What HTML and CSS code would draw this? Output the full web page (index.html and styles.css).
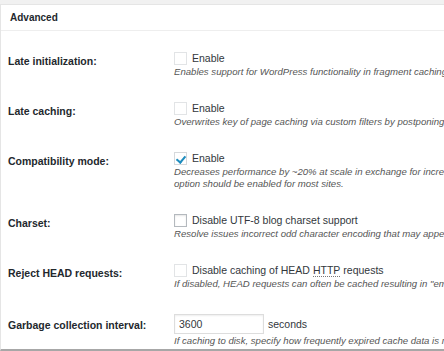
FILE: index.html
```html
<!DOCTYPE html>
<html lang="en">
  <head>
    <meta charset="UTF-8" />
    <meta name="viewport" content="width=device-width, initial-scale=1.0" />
    <title>Advanced settings</title>
    <link rel="stylesheet" href="styles.css">
  </head>
  <body>
    <div class="postbox">
      <h3 class="hndle">Advanced</h3>
      <div class="inside">
        <table class="form-table">
          <tr>
            <th>Late initialization:</th>
            <td>
              <label class="opt"><span class="check faint"></span>Enable</label>
              <p class="description">Enables support for WordPress functionality in fragment caching, e.g. translation support.</p>
            </td>
          </tr>
          <tr>
            <th>Late caching:</th>
            <td>
              <label class="opt"><span class="check faint"></span>Enable</label>
              <p class="description">Overwrites key of page caching via custom filters by postponing entry extraction.</p>
            </td>
          </tr>
          <tr>
            <th>Compatibility mode:</th>
            <td>
              <label class="opt"><span class="check checked"></span>Enable</label>
              <p class="description">Decreases performance by ~20% at scale in exchange for increased interoperability with more hosting environments and WordPress idioms. This<br>option should be enabled for most sites.</p>
            </td>
          </tr>
          <tr>
            <th>Charset:</th>
            <td>
              <label class="opt"><span class="check"></span>Disable UTF-8 blog charset support</label>
              <p class="description">Resolve issues incorrect odd character encoding that may appear in cached pages.</p>
            </td>
          </tr>
          <tr>
            <th>Reject HEAD requests:</th>
            <td>
              <label class="opt"><span class="check faint"></span>Disable caching of HEAD <abbr>HTTP</abbr> requests</label>
              <p class="description">If disabled, HEAD requests can often be cached resulting in "empty pages" being returned for subsequent requests.</p>
            </td>
          </tr>
          <tr class="input-row">
            <th>Garbage collection interval:</th>
            <td>
              <div class="opt"><input class="small-text" type="text" value="3600"> seconds</div>
              <p class="description">If caching to disk, specify how frequently expired cache data is removed.</p>
            </td>
          </tr>
        </table>
      </div>
    </div>
  </body>
</html>
```

FILE: styles.css
```css
* {
  margin: 0;
  padding: 0;
  box-sizing: border-box;
  font-family: "Liberation Sans", Arial, sans-serif;
}
body {
  background: #f1f1f1;
  overflow: hidden;
  color: #32373c;
}

.postbox {
  margin-top: 4px;
  width: 640px;
  height: 347px;
  background: #fff;
  border: 1px solid #e5e5e5;
  border-right: none;
  border-bottom: 2px solid #a7a7a7;
  overflow: hidden;
}

.hndle {
  font-size: 10px;
  font-weight: bold;
  color: #23282d;
  padding: 7px 9px 0;
  height: 26px;
  border-bottom: 1px solid #eee;
}

.inside {
  padding-top: 8px;
}

.form-table {
  border-collapse: collapse;
  table-layout: fixed;
  width: 639px;
}

.form-table th {
  width: 173px;
  text-align: left;
  vertical-align: top;
  font-size: 10.5px;
  font-weight: bold;
  color: #23282d;
  white-space: nowrap;
  padding: 16px 0 0 7px;
}

.form-table td {
  vertical-align: top;
  padding: 11px 0;
}

.opt {
  display: flex;
  align-items: center;
  height: 16px;
  font-size: 10.5px;
  color: #32373c;
  white-space: nowrap;
}

.check {
  width: 13px;
  height: 13px;
  margin-right: 5px;
  border: 1px solid #b4b9be;
  box-shadow: inset 0 1px 2px rgba(0, 0, 0, 0.1);
  position: relative;
}

.check.faint {
  border-color: #e2e4e6;
  box-shadow: none;
}

.check.checked {
  border-color: #d6d9dc;
  box-shadow: none;
}

.check.checked::after {
  content: "";
  position: absolute;
  left: 3px;
  top: 1px;
  width: 4px;
  height: 7px;
  border: solid #1e8cbe;
  border-width: 0 2px 2px 0;
  transform: rotate(40deg);
}

abbr {
  text-decoration: none;
  border-bottom: 1px dotted #777;
  margin: 0 3px;
}

.description {
  font-size: 9.6px;
  font-style: italic;
  color: #555;
  line-height: 12px;
  white-space: nowrap;
}

.input-row th {
  padding-top: 18px;
}

.input-row td {
  padding-top: 13px;
}

.input-row .opt {
  height: 20px;
}

.small-text {
  width: 90px;
  height: 20px;
  border: 1px solid #ddd;
  box-shadow: inset 0 1px 2px rgba(0, 0, 0, 0.07);
  padding: 0 4px;
  font-size: 10.5px;
  color: #32373c;
  margin-right: 4px;
}

.input-row .description {
  margin-top: 1px;
}
```
